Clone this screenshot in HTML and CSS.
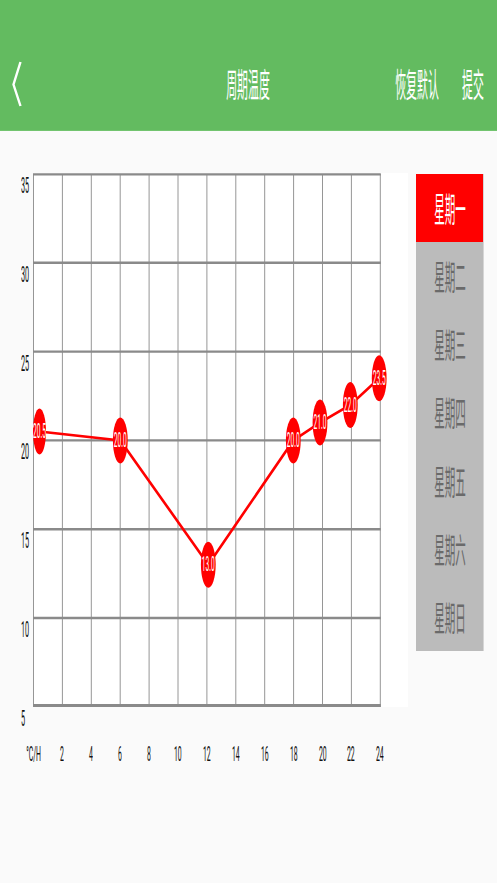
FILE: index.html
```html
<!DOCTYPE html>
<html lang="zh-CN">
<head>
  <meta charset="UTF-8">
  <meta name="viewport" content="width=device-width, initial-scale=1.0">
  <title>周期温度</title>
  <link rel="stylesheet" href="styles.css">
</head>
<body>
  <header class="topbar">
    <div class="bar">
      <a class="back" href="#">
        <svg width="12" height="48" viewBox="0 0 12 48">
          <polyline points="8.5,2 1.5,24.5 8.5,46" fill="none" stroke="#ffffff" stroke-width="2.4" />
        </svg>
      </a>
      <h1 class="title"><span class="squish">周期温度</span></h1>
      <div class="actions">
        <button class="action wide"><span class="squish">恢复默认</span></button>
        <button class="action"><span class="squish">提交</span></button>
      </div>
    </div>
  </header>

  <main class="content">
    <div class="chart">
      <div class="y-axis">
        <div class="y-label"><span class="squish">35</span></div>
        <div class="y-label"><span class="squish">30</span></div>
        <div class="y-label"><span class="squish">25</span></div>
        <div class="y-label"><span class="squish">20</span></div>
        <div class="y-label"><span class="squish">15</span></div>
        <div class="y-label"><span class="squish">10</span></div>
        <div class="y-label"><span class="squish">5</span></div>
      </div>

      <div class="plot">
        <svg width="375" height="534" viewBox="0 0 375 534">
          <!-- hour columns -->
          <g stroke="#969696" stroke-width="1">
            <line x1="0.5" y1="1" x2="0.5" y2="534" />
            <line x1="29.4" y1="1" x2="29.4" y2="534" />
            <line x1="58.3" y1="1" x2="58.3" y2="534" />
            <line x1="87.2" y1="1" x2="87.2" y2="534" />
            <line x1="116.1" y1="1" x2="116.1" y2="534" />
            <line x1="145" y1="1" x2="145" y2="534" />
            <line x1="173.9" y1="1" x2="173.9" y2="534" />
            <line x1="202.8" y1="1" x2="202.8" y2="534" />
            <line x1="231.7" y1="1" x2="231.7" y2="534" />
            <line x1="260.6" y1="1" x2="260.6" y2="534" />
            <line x1="289.5" y1="1" x2="289.5" y2="534" />
            <line x1="318.4" y1="1" x2="318.4" y2="534" />
            <line x1="347.3" y1="1" x2="347.3" y2="534" />
          </g>
          <!-- temperature rows -->
          <g stroke="#8a8a8a" stroke-width="2.4">
            <line x1="0" y1="1.4" x2="347.8" y2="1.4" />
            <line x1="0" y1="89.8" x2="347.8" y2="89.8" />
            <line x1="0" y1="178.6" x2="347.8" y2="178.6" />
            <line x1="0" y1="267.4" x2="347.8" y2="267.4" />
            <line x1="0" y1="356.2" x2="347.8" y2="356.2" />
            <line x1="0" y1="445" x2="347.8" y2="445" />
            <line x1="0" y1="532.6" x2="347.8" y2="532.6" stroke-width="3" />
          </g>

          <polyline class="temp-line" points="6.5,258.5 87.3,267.4 175.3,391.7 260.3,267.4 287,249.6 317.3,231.9 346.2,205.2" />

          <g class="points">
            <ellipse cx="6.5" cy="258.5" rx="6.5" ry="23" />
            <ellipse cx="87.3" cy="267.4" rx="7.4" ry="23" />
            <ellipse cx="175.3" cy="391.7" rx="7.4" ry="23" />
            <ellipse cx="260.3" cy="267.4" rx="7.4" ry="23" />
            <ellipse cx="287" cy="249.6" rx="7.4" ry="23" />
            <ellipse cx="317.3" cy="231.9" rx="7.4" ry="23" />
            <ellipse cx="346.2" cy="205.2" rx="7.4" ry="23" />
          </g>
          <g class="point-labels">
            <text transform="translate(6.5 258.5) scale(0.33 1)">20.5</text>
            <text transform="translate(87.3 267.4) scale(0.33 1)">20.0</text>
            <text transform="translate(175.3 391.7) scale(0.33 1)">13.0</text>
            <text transform="translate(260.3 267.4) scale(0.33 1)">20.0</text>
            <text transform="translate(287 249.6) scale(0.33 1)">21.0</text>
            <text transform="translate(317.3 231.9) scale(0.33 1)">22.0</text>
            <text transform="translate(346.2 205.2) scale(0.33 1)">23.5</text>
          </g>
        </svg>
      </div>

      <div class="x-axis">
        <span class="x-label"><span class="squish">°C/H</span></span>
        <span class="x-label"><span class="squish">2</span></span>
        <span class="x-label"><span class="squish">4</span></span>
        <span class="x-label"><span class="squish">6</span></span>
        <span class="x-label"><span class="squish">8</span></span>
        <span class="x-label"><span class="squish">10</span></span>
        <span class="x-label"><span class="squish">12</span></span>
        <span class="x-label"><span class="squish">14</span></span>
        <span class="x-label"><span class="squish">16</span></span>
        <span class="x-label"><span class="squish">18</span></span>
        <span class="x-label"><span class="squish">20</span></span>
        <span class="x-label"><span class="squish">22</span></span>
        <span class="x-label"><span class="squish">24</span></span>
      </div>
    </div>

    <nav class="days">
      <a class="day active" href="#"><span class="squish">星期一</span></a>
      <a class="day" href="#"><span class="squish">星期二</span></a>
      <a class="day" href="#"><span class="squish">星期三</span></a>
      <a class="day" href="#"><span class="squish">星期四</span></a>
      <a class="day" href="#"><span class="squish">星期五</span></a>
      <a class="day" href="#"><span class="squish">星期六</span></a>
      <a class="day" href="#"><span class="squish">星期日</span></a>
    </nav>
  </main>
</body>
</html>
```

FILE: styles.css
```css
body {
  margin: 0;
  padding: 0;
  background-color: #fafafa;
  font-family: "Noto Sans CJK SC", "Noto Sans", sans-serif;
}

/* narrow glyphs, the app draws its text squeezed */
.squish {
  display: inline-block;
  white-space: nowrap;
  transform: scaleX(0.33);
  transform-origin: center;
}

/* top bar */
.topbar {
  height: 131px;
  box-sizing: border-box;
  padding-top: 36px;
  background-color: #63bb60;
  border-bottom: 1px solid #72c46f;
}
.bar {
  height: 95px;
  display: grid;
  grid-template-columns: 1fr auto 1fr;
  align-items: center;
  padding: 0 13px 0 12px;
}
.back {
  justify-self: start;
  display: flex;
}
.title {
  margin: 0;
  font-size: 33px;
  font-weight: 400;
  line-height: 1;
  color: #ffffff;
  text-align: center;
}
.actions {
  justify-self: end;
  display: flex;
  gap: 23px;
}
.action {
  width: 22px;
  display: flex;
  justify-content: center;
  padding: 0;
  border: 0;
  background: none;
  font-family: inherit;
  font-size: 33px;
  line-height: 1;
  color: #ffffff;
}
.action.wide {
  width: 44px;
}

/* chart */
.content {
  display: flex;
  align-items: flex-start;
  padding-top: 42px;
}
.chart {
  display: grid;
  grid-template-columns: 33px 375px;
  grid-template-rows: 534px auto;
}
.y-axis {
  display: flex;
  flex-direction: column;
  padding-top: 3px;
  padding-left: 21px;
}
.y-label {
  flex-shrink: 0;
  height: 88.8px;
  font-family: Roboto, "Noto Sans", sans-serif;
  font-size: 22px;
  line-height: 20px;
  color: #111111;
}
.y-label .squish {
  transform-origin: left center;
}
.plot {
  background-color: #ffffff;
}
.plot svg {
  display: block;
}
.temp-line {
  fill: none;
  stroke: #ff0000;
  stroke-width: 2.6;
}
.points ellipse {
  fill: #ff0000;
}
.point-labels text {
  fill: #ffffff;
  font-family: Roboto, "Noto Sans", sans-serif;
  font-size: 20px;
  text-anchor: middle;
  dominant-baseline: central;
}
.x-axis {
  grid-column: 2;
  display: flex;
  margin-left: -14px;
  margin-top: 32px;
  font-family: Roboto, "Noto Sans", sans-serif;
  font-size: 21px;
  line-height: 30px;
  color: #111111;
}
.x-label {
  width: 28.9px;
  flex-shrink: 0;
  display: flex;
  justify-content: center;
}

/* week days */
.days {
  display: flex;
  flex-direction: column;
  width: 67px;
  height: 477px;
  margin-left: 8px;
  margin-top: 1px;
  background-color: #bbbbbb;
  border-right: 1px solid #d6d6d6;
}
.day {
  flex: 1;
  display: flex;
  align-items: center;
  justify-content: center;
  font-size: 34px;
  line-height: 1;
  color: #6a6a6a;
  text-decoration: none;
}
.day .squish {
  transform: scaleX(0.31);
}
.day.active {
  background-color: #ff0000;
  color: #ffffff;
}
```
